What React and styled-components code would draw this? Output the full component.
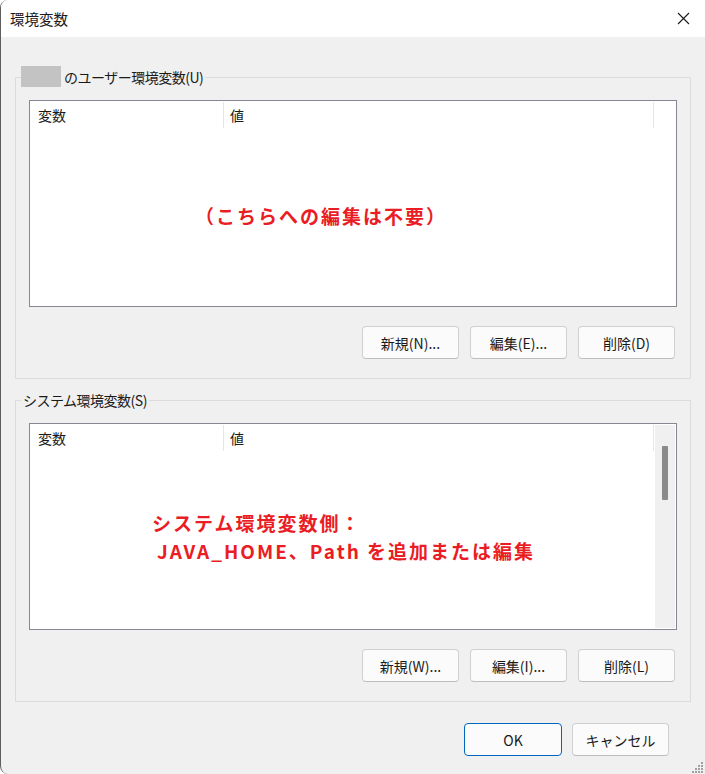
import styled, { createGlobalStyle } from "styled-components";

const GlobalStyle = createGlobalStyle`
  html, body {
    margin: 0;
    background: #ffffff;
  }
  body {
    font-family: "Noto Sans CJK JP", "Noto Sans", sans-serif;
    color: #1a1a1a;
  }
`;

const Window = styled.div`
  position: relative;
  width: 705px;
  height: 774px;
  box-sizing: border-box;
  background: #f0f0f0;
  border-left: 1px solid #5e5e5e;
  border-radius: 8px 0 0 8px;
  overflow: hidden;
  display: flex;
  flex-direction: column;
`;

const TitleBar = styled.div`
  height: 37px;
  flex-shrink: 0;
  background: #ffffff;
  display: flex;
  align-items: center;
  justify-content: space-between;
  padding: 0 15px 0 9px;
  font-size: 14.5px;
`;

const Content = styled.div`
  padding-top: 29px;
  display: flex;
  flex-direction: column;
`;

const Group = styled.fieldset`
  margin: ${(p) => (p.$first ? "0" : "10px")} 14px 0 14px;
  padding: 12px 13px 19px 13px;
  border: 1px solid #dcdcdc;
  min-width: 0;
`;

const Legend = styled.legend`
  margin-left: -8px;
  padding: ${(p) => (p.$flush ? "0 2px 0 0" : "0 2px")};
  line-height: 22px;
  height: 22px;
  font-size: 14px;
  letter-spacing: -0.5px;
`;

const Redacted = styled.span`
  display: inline-block;
  width: 40px;
  height: 21px;
  background: #c3c3c3;
  vertical-align: top;
  margin-right: 3px;
`;

const ListBox = styled.div`
  height: 207px;
  box-sizing: border-box;
  border: 1px solid #858891;
  background: #ffffff;
  display: flex;
`;

const ListMain = styled.div`
  flex: 1;
  display: flex;
  flex-direction: column;
  min-width: 0;
`;

const Header = styled.div`
  height: 26px;
  margin-top: 1px;
  display: flex;
  flex-shrink: 0;
`;

const HeaderCell = styled.div`
  width: ${(p) => (p.$width ? `${p.$width}px` : "auto")};
  flex: ${(p) => (p.$width ? "none" : "1")};
  box-sizing: border-box;
  border-right: ${(p) => (p.$width ? "1px solid #e5e5e5" : "none")};
  padding-left: ${(p) => p.$pad || 0}px;
  display: flex;
  align-items: center;
  font-size: 14px;
`;

const ListBody = styled.div`
  flex: 1;
  padding: ${(p) => p.$top}px 0 0 ${(p) => p.$left}px;
`;

const Note = styled.div`
  color: #ea1d25;
  font-size: 19px;
  font-weight: 700;
  letter-spacing: 2px;
  line-height: 28px;
  white-space: nowrap;
  padding-left: ${(p) => p.$indent || 0}px;
`;

const ScrollTrack = styled.div`
  width: 20px;
  margin: 1px 1px 1px 0;
  background: #f0f0f0;
  display: flex;
  justify-content: center;
  padding-top: 21px;
  box-sizing: border-box;
`;

const ScrollThumb = styled.div`
  width: 6px;
  height: 54px;
  background: #8b8b8b;
  border-radius: 1px;
`;

const ButtonRow = styled.div`
  display: flex;
  justify-content: flex-end;
  gap: 11px;
  margin-top: 19px;
  padding-right: 2px;
`;

const Button = styled.button`
  width: ${(p) => p.$width || 97}px;
  height: 33px;
  box-sizing: border-box;
  background: #fbfbfb;
  border: 1px solid ${(p) => (p.$primary ? "#0067c0" : "#d0d0d0")};
  border-bottom-color: ${(p) => (p.$primary ? "#0067c0" : "#bdbdbd")};
  border-radius: 4px;
  font-family: inherit;
  font-size: 14px;
  color: #1a1a1a;
  padding: 0;
  cursor: pointer;
`;

const Footer = styled.div`
  display: flex;
  justify-content: flex-end;
  gap: 10px;
  margin-top: 21px;
  padding-right: 36px;
`;

const Grip = styled.svg`
  position: absolute;
  right: 1px;
  bottom: 1px;
`;

const CloseIcon = () => (
  <svg width="13" height="13" viewBox="0 0 13 13">
    <path d="M1 1 L12 12 M12 1 L1 12" stroke="#1a1a1a" strokeWidth="1.1" fill="none" />
  </svg>
);

const VarList = ({ scroll, children, top, left }) => (
  <ListBox>
    <ListMain>
      <Header>
        <HeaderCell $width={194} $pad={8}>変数</HeaderCell>
        <HeaderCell $width={430} $pad={6}>値</HeaderCell>
        <HeaderCell />
      </Header>
      <ListBody $top={top} $left={left}>
        {children}
      </ListBody>
    </ListMain>
    {scroll && (
      <ScrollTrack>
        <ScrollThumb />
      </ScrollTrack>
    )}
  </ListBox>
);

const App = () => {
  return (
    <Window>
      <GlobalStyle />
      <TitleBar>
        <span>環境変数</span>
        <CloseIcon />
      </TitleBar>
      <Content>
        <Group $first>
          <Legend $flush>
            <Redacted />
            のユーザー環境変数(U)
          </Legend>
          <VarList top={74} left={165}>
            <Note>（こちらへの編集は不要）</Note>
          </VarList>
          <ButtonRow>
            <Button>新規(N)...</Button>
            <Button>編集(E)...</Button>
            <Button>削除(D)</Button>
          </ButtonRow>
        </Group>

        <Group>
          <Legend>システム環境変数(S)</Legend>
          <VarList scroll top={58} left={122}>
            <Note>システム環境変数側：</Note>
            <Note $indent={5}>JAVA_HOME、Path を追加または編集</Note>
          </VarList>
          <ButtonRow>
            <Button>新規(W)...</Button>
            <Button>編集(I)...</Button>
            <Button>削除(L)</Button>
          </ButtonRow>
        </Group>

        <Footer>
          <Button $primary $width={98}>OK</Button>
          <Button>キャンセル</Button>
        </Footer>
      </Content>
      <Grip width="12" height="12" viewBox="0 0 12 12">
        {[
          [9, 1], [6, 4], [9, 4], [3, 7], [6, 7], [9, 7], [0, 10], [3, 10], [6, 10], [9, 10],
        ].map(([x, y]) => (
          <rect key={`${x}-${y}`} x={x} y={y} width="2" height="2" fill="#a0a0a0" />
        ))}
      </Grip>
    </Window>
  );
};

export default App;
